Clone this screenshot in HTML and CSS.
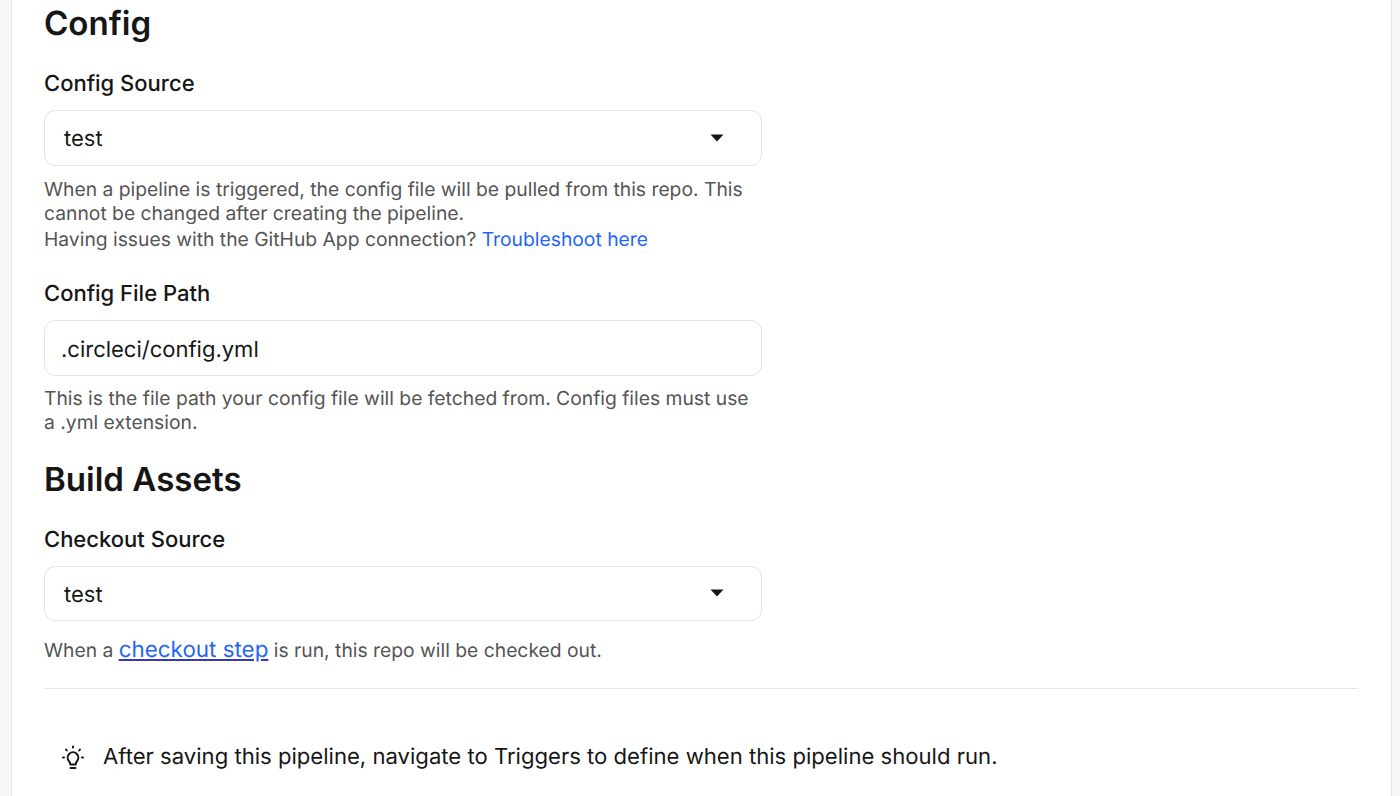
FILE: index.html
```html
<!DOCTYPE html>
<html lang="en">
<head>
<meta charset="utf-8">
<title>Pipeline settings</title>
<link rel="stylesheet" href="styles.css">
</head>
<body>
<main class="card">
  <section class="form">
    <h2 class="heading">Config</h2>
    <div class="field">
      <div class="label">Config Source</div>
      <div class="select"><span class="value">test</span>
        <svg class="caret" width="14" height="8" viewBox="0 0 14 8"><path d="M0.5 0.5H13.5L7 7.5Z" fill="#161616"/></svg>
      </div>
      <p class="help">When a pipeline is triggered, the config file will be pulled from this repo. This cannot be changed after creating the pipeline.</p>
      <p class="help second">Having issues with the GitHub App connection? <a class="link" href="#">Troubleshoot here</a></p>
    </div>
    <div class="field path">
      <div class="label">Config File Path</div>
      <div class="input"><span class="value">.circleci/config.yml</span></div>
      <p class="help tight">This is the file path your config file will be fetched from. Config files must use a .yml extension.</p>
    </div>
    <h2 class="heading assets">Build Assets</h2>
    <div class="field">
      <div class="label">Checkout Source</div>
      <div class="select"><span class="value">test</span>
        <svg class="caret" width="14" height="8" viewBox="0 0 14 8"><path d="M0.5 0.5H13.5L7 7.5Z" fill="#161616"/></svg>
      </div>
      <p class="help checkout">When a <a class="link big" href="#">checkout step</a> is run, this repo will be checked out.</p>
    </div>
  </section>
  <hr class="rule">
  <div class="tip">
    <svg class="bulb" width="26" height="26" viewBox="0 0 26 26" fill="none" stroke="#161616" stroke-width="2" stroke-linecap="round" stroke-linejoin="round">
      <path d="M10.300 20.500c0-1.700-.6-2.500-1.300-3.400a5.300 5.300 0 1 1 8 0c-.7.900-1.300 1.700-1.300 3.400z"/>
      <path d="M10.500 24h5"/>
      <path d="M13 2.500v1M6 5.500l.8 1M20 5.500l-.8 1M3 13.500h1M22 13.500h1"/>
    </svg>
    <span>After saving this pipeline, navigate to Triggers to define when this pipeline should run.</span>
  </div>
</main>
</body>
</html>
```

FILE: styles.css
```css
* { box-sizing: border-box; }
html, body { margin: 0; height: 100%; overflow: hidden; }
body {
  background: #f6f6f6;
  font-family: Inter, "Liberation Sans", sans-serif;
  color: #161616;
  padding: 0 8px 0 11px;
  text-rendering: geometricPrecision;
}
.card {
  height: 796px;
  background: #fff;
  border-left: 1px solid #e7e7e7;
  border-right: 1px solid #e7e7e7;
  padding: 0 33px 0 32px;
}
.form { width: 718px; }
.heading {
  margin: 0;
  font-size: 33.1px;
  font-weight: 600;
  line-height: 47px;
}
.assets { margin-top: 21px; }
.field { margin-top: 23px; }
.field.path { margin-top: 29px; }
.label {
  font-size: 22px;
  font-weight: 500;
  line-height: 28px;
  margin-bottom: 12px;
}
.select, .input {
  height: 55.6px;
  border: 1px solid #e3e3e3;
  border-radius: 11px;
  font-size: 22px;
  display: flex;
  align-items: center;
  background: #fff;
}
.select { justify-content: space-between; padding: 0 37px 0 19px; }
.value { padding-top: 3px; }
.input { padding: 0 16px; }
.help {
  margin: 11px 0 0;
  font-size: 19.3px;
  line-height: 24.3px;
  color: #555;
}
.help.second { margin-top: 2px; }
.help.tight { margin-top: 10px; }
.help.checkout { margin-top: 17px; }
.link { color: #1f66f5; text-decoration: none; }
.link.big { font-size: 22.4px; text-decoration: underline; text-decoration-color: #3a36b8; }
.rule {
  border: 0;
  border-top: 1px solid #e7e7e7;
  margin: 25px 0 0;
}
.tip {
  display: flex;
  align-items: center;
  gap: 17px;
  margin-top: 54px;
  padding-left: 16px;
  font-size: 22.1px;
  line-height: 28px;
}
.bulb { flex: none; }
```
